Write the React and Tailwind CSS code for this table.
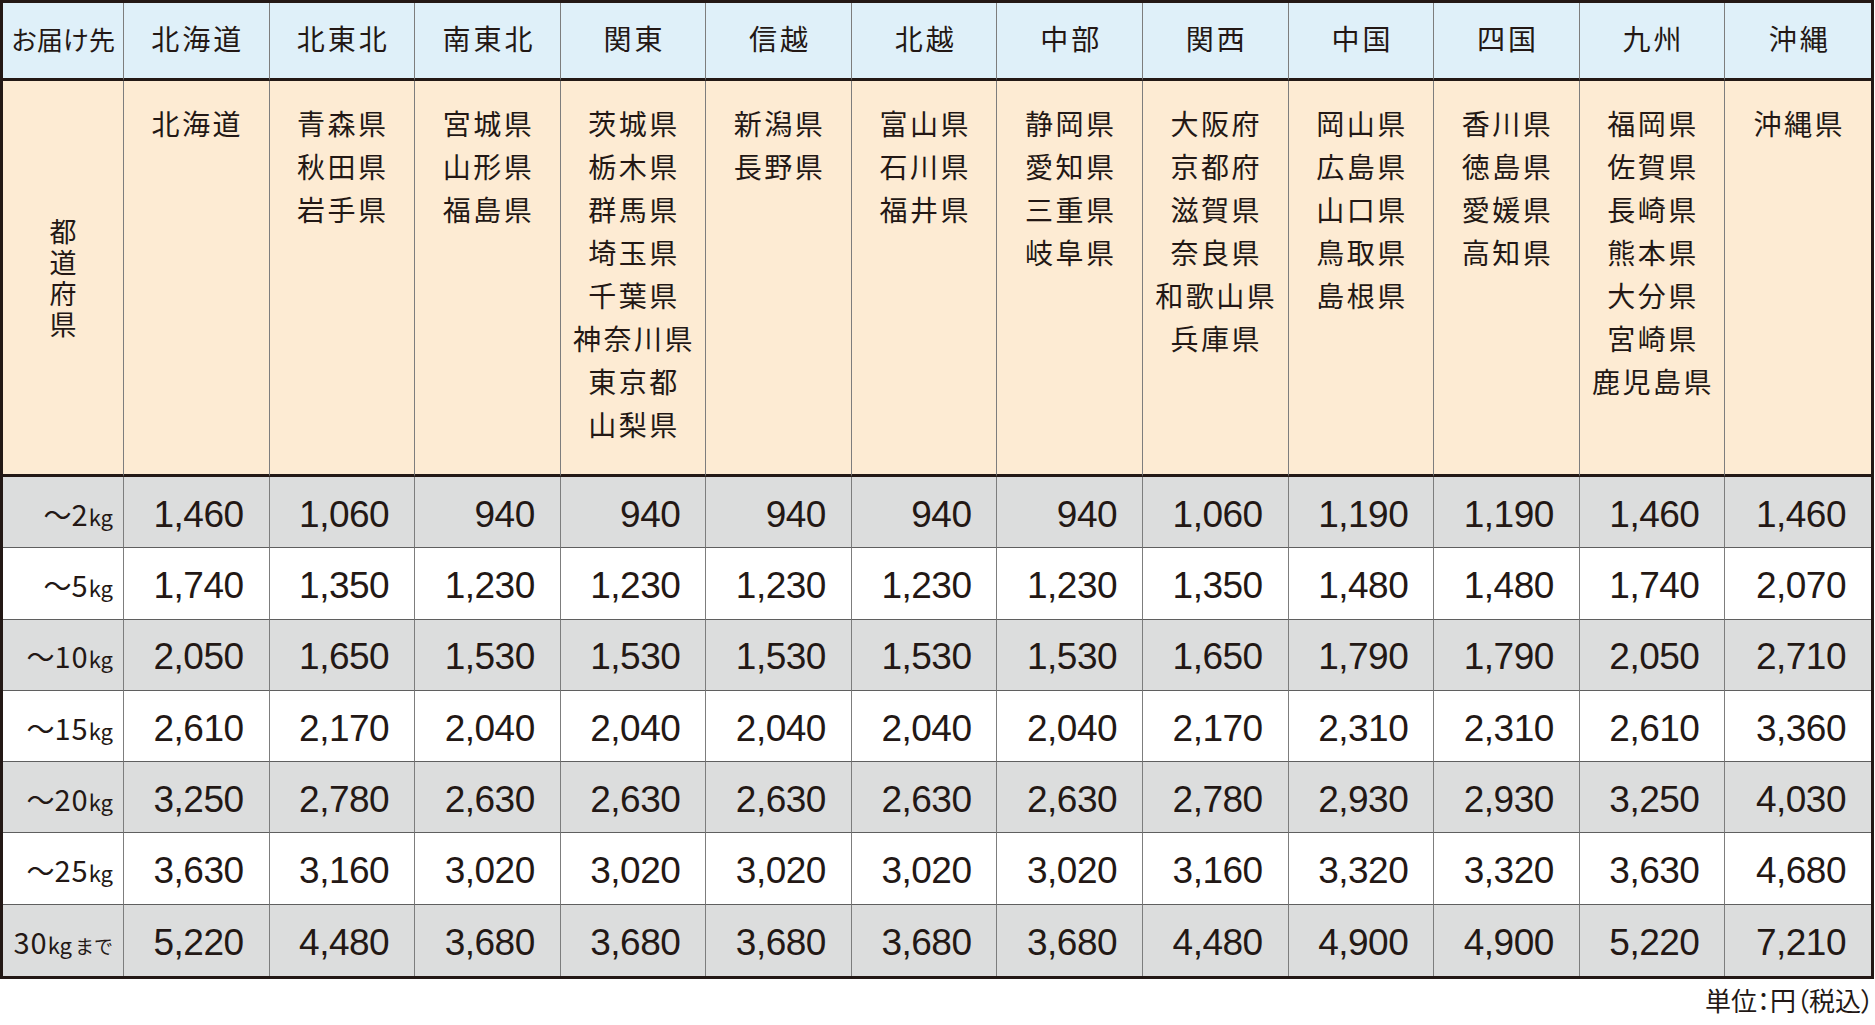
import React from "react";

const regions = ["北海道", "北東北", "南東北", "関東", "信越", "北越", "中部", "関西", "中国", "四国", "九州", "沖縄"];

const prefectures = [
  ["北海道"],
  ["青森県", "秋田県", "岩手県"],
  ["宮城県", "山形県", "福島県"],
  ["茨城県", "栃木県", "群馬県", "埼玉県", "千葉県", "神奈川県", "東京都", "山梨県"],
  ["新潟県", "長野県"],
  ["富山県", "石川県", "福井県"],
  ["静岡県", "愛知県", "三重県", "岐阜県"],
  ["大阪府", "京都府", "滋賀県", "奈良県", "和歌山県", "兵庫県"],
  ["岡山県", "広島県", "山口県", "鳥取県", "島根県"],
  ["香川県", "徳島県", "愛媛県", "高知県"],
  ["福岡県", "佐賀県", "長崎県", "熊本県", "大分県", "宮崎県", "鹿児島県"],
  ["沖縄県"],
];

const rates = [
  { weight: "2", prices: [1460, 1060, 940, 940, 940, 940, 940, 1060, 1190, 1190, 1460, 1460] },
  { weight: "5", prices: [1740, 1350, 1230, 1230, 1230, 1230, 1230, 1350, 1480, 1480, 1740, 2070] },
  { weight: "10", prices: [2050, 1650, 1530, 1530, 1530, 1530, 1530, 1650, 1790, 1790, 2050, 2710] },
  { weight: "15", prices: [2610, 2170, 2040, 2040, 2040, 2040, 2040, 2170, 2310, 2310, 2610, 3360] },
  { weight: "20", prices: [3250, 2780, 2630, 2630, 2630, 2630, 2630, 2780, 2930, 2930, 3250, 4030] },
  { weight: "25", prices: [3630, 3160, 3020, 3020, 3020, 3020, 3020, 3160, 3320, 3320, 3630, 4680] },
  { weight: "30", last: true, prices: [5220, 4480, 3680, 3680, 3680, 3680, 3680, 4480, 4900, 4900, 5220, 7210] },
];

const jp = "font-['Noto_Sans_CJK_JP',sans-serif]";

const WeightLabel = ({ weight, last }) =>
  last ? (
    <span className="flex items-baseline">
      <span className="text-[29px] tracking-[1px]">{weight}</span>
      <span className="text-[22px]">kg</span>
      <span className="text-[19px] ml-[3px]">まで</span>
    </span>
  ) : (
    <span className="flex items-baseline">
      <span className="text-[28px]">〜</span>
      <span className="text-[29px] tracking-[1px]">{weight}</span>
      <span className="text-[22px]">kg</span>
    </span>
  );

const App = () => {
  return (
    <div className={`w-[1875px] h-[1025px] bg-white text-[#231815] ${jp}`}>
      <div className="w-[1874px] border-[3px] border-[#231815]">
        <div className="grid grid-cols-[121px_repeat(12,minmax(0,1fr))]">
          {/* header row */}
          <div className="h-[78px] bg-[#dff0f9] border-r border-b-[3px] border-r-[#7d7d7d] border-b-[#231815] flex items-center justify-center pb-[5px] text-[26px]">
            お届け先
          </div>
          {regions.map((r, i) => (
            <div
              key={r}
              className={`h-[78px] bg-[#dff0f9] border-b-[3px] border-b-[#231815] flex items-center justify-center pb-[5px] text-[28px] tracking-[3px] pl-[3px] ${
                i < 11 ? "border-r border-r-[#7d7d7d]" : ""
              }`}
            >
              {r}
            </div>
          ))}

          {/* prefecture row */}
          <div className="h-[396px] bg-[#fdebd3] border-r border-b-[3px] border-r-[#7d7d7d] border-b-[#231815] flex items-center justify-center">
            <span className="[writing-mode:vertical-rl] text-[27px] leading-none tracking-[4px] pt-[4px]">
              都道府県
            </span>
          </div>
          {prefectures.map((list, i) => (
            <div
              key={i}
              className={`h-[396px] bg-[#fdebd3] border-b-[3px] border-b-[#231815] pt-[21px] flex flex-col items-center text-[28px] leading-[43px] tracking-[2.5px] pl-[2px] ${
                i < 11 ? "border-r border-r-[#7d7d7d]" : ""
              }`}
            >
              {list.map((p) => (
                <span key={p} className="whitespace-nowrap">
                  {p}
                </span>
              ))}
            </div>
          ))}

          {/* price rows */}
          {rates.map((row, ri) => {
            const bg = ri % 2 === 0 ? "bg-[#dcdddd]" : "bg-white";
            const bottom = ri < rates.length - 1 ? "border-b border-b-[#5f5f5f]" : "";
            return (
              <React.Fragment key={ri}>
                <div
                  className={`h-[71.3px] ${bg} ${bottom} border-r border-r-[#7d7d7d] flex items-center justify-end pr-[10px] pt-[3px]`}
                >
                  <WeightLabel weight={row.weight} last={row.last} />
                </div>
                {row.prices.map((p, ci) => (
                  <div
                    key={ci}
                    className={`h-[71.3px] ${bg} ${bottom} ${
                      ci < 11 ? "border-r border-r-[#7d7d7d]" : ""
                    } flex items-center justify-end pr-[25px] pt-[4px] font-['Liberation_Sans',Arial,sans-serif] text-[37px] tracking-[-0.5px] leading-none`}
                  >
                    {p.toLocaleString("en-US")}
                  </div>
                ))}
              </React.Fragment>
            );
          })}
        </div>
      </div>
      <div className="w-[1874px] flex justify-end mt-[6px] text-[26px] leading-[30px] [font-feature-settings:'palt']">
        単位：円（税込）
      </div>
    </div>
  );
};

export default App;
